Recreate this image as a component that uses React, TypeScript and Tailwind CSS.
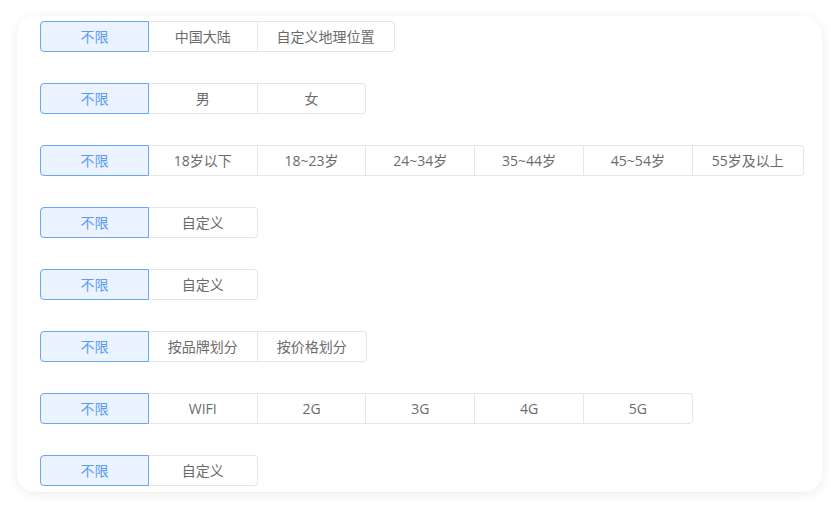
import React, { useState } from "react";

type Group = { options: string[] };

const groups: Group[] = [
  { options: ["不限", "中国大陆", "自定义地理位置"] },
  { options: ["不限", "男", "女"] },
  { options: ["不限", "18岁以下", "18~23岁", "24~34岁", "35~44岁", "45~54岁", "55岁及以上"] },
  { options: ["不限", "自定义"] },
  { options: ["不限", "自定义"] },
  { options: ["不限", "按品牌划分", "按价格划分"] },
  { options: ["不限", "WIFI", "2G", "3G", "4G", "5G"] },
  { options: ["不限", "自定义"] },
];

function RadioGroup({ options }: Group) {
  const [value, setValue] = useState(0);
  return (
    <div className="flex">
      {options.map((opt, i) => {
        const active = i === value;
        const first = i === 0;
        const last = i === options.length - 1;
        return (
          <button
            key={opt + i}
            onClick={() => setValue(i)}
            className={[
              "h-[31px] min-w-[108.8px] px-[19px] text-[14px] leading-none whitespace-nowrap border",
              first ? "rounded-l-[4px]" : "border-l-0",
              last ? "rounded-r-[4px]" : "",
              active
                ? "bg-[#eaf3ff] border-[#6aa6f8] text-[#5b9bf6]"
                : "bg-white border-[#e6e6e6] text-[#6b6b6b]",
            ].join(" ")}
          >
            {opt}
          </button>
        );
      })}
    </div>
  );
}

export default function App() {
  return (
    <div
      className="w-[838px] h-[508px] bg-white pt-4 pl-[17px]"
      style={{ fontFamily: '"Open Sans", "Noto Sans CJK SC", sans-serif' }}
    >
      <div className="w-[805px] h-[476px] rounded-[18px] bg-white shadow-[0_2px_12px_rgba(0,0,0,0.08)] pl-[23px] pt-[5px] flex flex-col gap-[31px]">
        {groups.map((g, i) => (
          <RadioGroup key={i} options={g.options} />
        ))}
      </div>
    </div>
  );
}
